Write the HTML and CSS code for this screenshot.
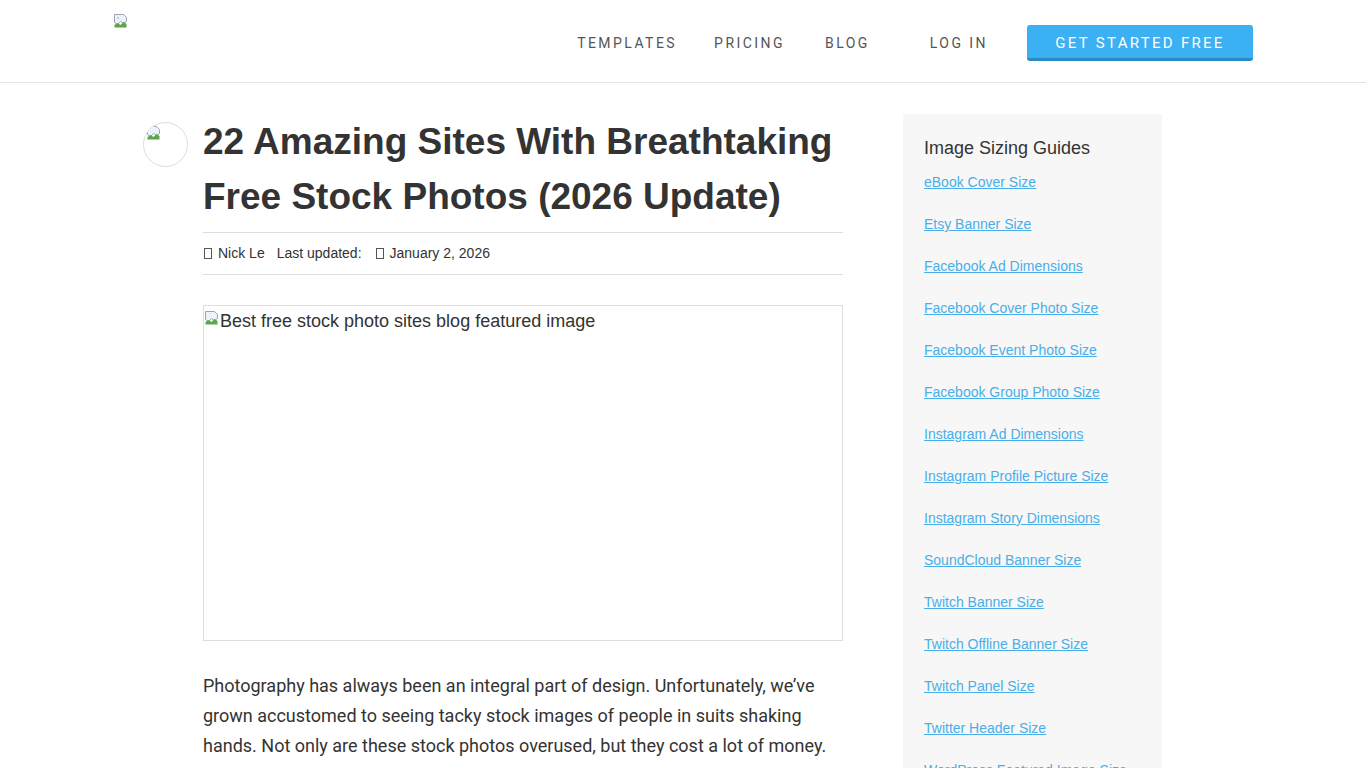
FILE: index.html
```html
<!DOCTYPE html>
<html lang="en">
<head>
<meta charset="utf-8">
<title>22 Amazing Sites With Breathtaking Free Stock Photos</title>
<link rel="stylesheet" href="styles.css">
</head>
<body>
<header class="site-header">
  <div class="container header-inner">
    <a class="logo" href="#">
      <svg class="broken" width="16" height="16" viewBox="0 0 16 16"><path d="M1.5 1.5h9l3 3v4l-3 2-3-2-3 3-3-2z" fill="#eef3fb" stroke="#9aa4b0"/><path d="M1.5 12l3-2 3 2 3-3 3 2v3.5h-12z" fill="#5aa64a"/><circle cx="5" cy="5" r="1.2" fill="#bcd"/></svg>
    </a>
    <nav class="nav">
      <a href="#">TEMPLATES</a>
      <a href="#" class="pricing">PRICING</a>
      <a href="#" class="blog">BLOG</a>
      <a href="#" class="login">LOG IN</a>
      <a href="#" class="cta">GET STARTED FREE</a>
    </nav>
  </div>
</header>
<main class="container main">
  <div class="avatar">
    <svg class="broken" width="16" height="16" viewBox="0 0 16 16"><path d="M1.5 1.5h9l3 3v4l-3 2-3-2-3 3-3-2z" fill="#eef3fb" stroke="#9aa4b0"/><path d="M1.5 12l3-2 3 2 3-3 3 2v3.5h-12z" fill="#5aa64a"/></svg>
  </div>
  <article class="article">
    <h1 class="title">22 Amazing Sites With Breathtaking Free Stock Photos (2026 Update)</h1>
    <div class="meta">
      <span class="tofu"></span><span>Nick Le</span>
      <span class="updated">Last updated:</span>
      <span class="tofu"></span><span>January 2, 2026</span>
    </div>
    <div class="featured">
      <svg class="broken" width="16" height="16" viewBox="0 0 16 16"><path d="M1.5 1.5h9l3 3v4l-3 2-3-2-3 3-3-2z" fill="#eef3fb" stroke="#9aa4b0"/><path d="M1.5 12l3-2 3 2 3-3 3 2v3.5h-12z" fill="#5aa64a"/></svg><span>Best free stock photo sites blog featured image</span>
    </div>
    <p class="lead">Photography has always been an integral part of design. Unfortunately, we’ve grown accustomed to seeing tacky stock images of people in suits shaking hands. Not only are these stock photos overused, but they cost a lot of money.</p>
  </article>
  <aside class="sidebar">
    <h3 class="side-title">Image Sizing Guides</h3>
    <ul class="side-list">
      <li><a href="#">eBook Cover Size</a></li>
      <li><a href="#">Etsy Banner Size</a></li>
      <li><a href="#">Facebook Ad Dimensions</a></li>
      <li><a href="#">Facebook Cover Photo Size</a></li>
      <li><a href="#">Facebook Event Photo Size</a></li>
      <li><a href="#">Facebook Group Photo Size</a></li>
      <li><a href="#">Instagram Ad Dimensions</a></li>
      <li><a href="#">Instagram Profile Picture Size</a></li>
      <li><a href="#">Instagram Story Dimensions</a></li>
      <li><a href="#">SoundCloud Banner Size</a></li>
      <li><a href="#">Twitch Banner Size</a></li>
      <li><a href="#">Twitch Offline Banner Size</a></li>
      <li><a href="#">Twitch Panel Size</a></li>
      <li><a href="#">Twitter Header Size</a></li>
      <li><a href="#">WordPress Featured Image Size</a></li>
    </ul>
  </aside>
</main>
</body>
</html>
```
FILE: styles.css
```css
* { box-sizing: border-box; }
html, body { margin: 0; padding: 0; }
body {
  font-family: "Liberation Sans", Arial, sans-serif;
  color: #333;
  background: #fff;
}
a { text-decoration: none; }
.container {
  width: 1140px;
  margin: 0 auto;
}
.site-header {
  height: 83px;
  border-bottom: 1px solid #e3e3e3;
}
.header-inner {
  display: flex;
  justify-content: space-between;
  align-items: flex-start;
}
.logo {
  display: block;
  margin-top: 13px;
  height: 16px;
}
.broken { display: block; }
.nav {
  display: flex;
  align-items: center;
  margin-top: 25px;
  font-family: Roboto, "Liberation Sans", sans-serif;
  font-size: 14px;
  letter-spacing: 2.45px;
}
.nav a {
  color: #555;
}
.nav .pricing { margin-left: 37px; }
.nav .blog { margin-left: 40px; }
.nav .login { margin-left: 60px; }
.nav .cta {
  margin-left: 39px;
  width: 226px;
  height: 36px;
  display: flex;
  align-items: center;
  justify-content: center;
  background: #3bb0f3;
  color: #fff;
  border-radius: 3px;
  border-bottom: 3px solid #2a8bc6;
  padding-top: 2px;
  font-size: 15px;
  letter-spacing: 2.3px;
}
.main {
  display: flex;
  align-items: flex-start;
  padding-left: 30px;
  padding-top: 31px;
}
.avatar {
  width: 45px;
  height: 45px;
  border-radius: 50%;
  border: 1px solid #ddd;
  margin-top: 8px;
  margin-right: 15px;
  flex: none;
  overflow: hidden;
  padding: 2px 0 0 2px;
}
.article {
  width: 640px;
  flex: none;
}
.title {
  font-size: 37px;
  font-weight: bold;
  line-height: 55px;
  margin: 0 0 8px 0;
  color: #333;
}
.meta {
  border-top: 1px solid #ddd;
  border-bottom: 1px solid #ddd;
  height: 43px;
  display: flex;
  align-items: center;
  padding-bottom: 2px;
  font-size: 14px;
  color: #333;
}
.tofu {
  display: inline-block;
  width: 8px;
  height: 11px;
  border: 1px solid #555;
  margin: 1px 6px 0 1px;
}
.updated { margin: 0 13px 0 12px; }
.featured {
  margin-top: 30px;
  height: 336px;
  border: 1px solid #ddd;
  display: flex;
  align-items: flex-start;
  padding-top: 2px;
  font-size: 18px;
  line-height: 26px;
  color: #333;
}
.featured .broken { margin-top: 2px; }
.lead {
  margin: 30px 0 0 0;
  font-family: Roboto, "Liberation Sans", sans-serif;
  font-size: 18px;
  line-height: 30px;
  color: #333;
}
.sidebar {
  width: 259px;
  flex: none;
  margin-left: 60px;
  background: #f7f7f7;
  padding: 23px 21px 20px 21px;
}
.side-title {
  font-size: 18px;
  font-weight: normal;
  margin: 0 0 15px 0;
  line-height: 22px;
  color: #333;
}
.side-list {
  list-style: none;
  margin: 0;
  padding: 0;
}
.side-list li {
  font-size: 14px;
  line-height: 16px;
  margin-bottom: 26px;
}
.side-list a {
  color: #4aaee8;
  text-decoration: underline;
}
```
